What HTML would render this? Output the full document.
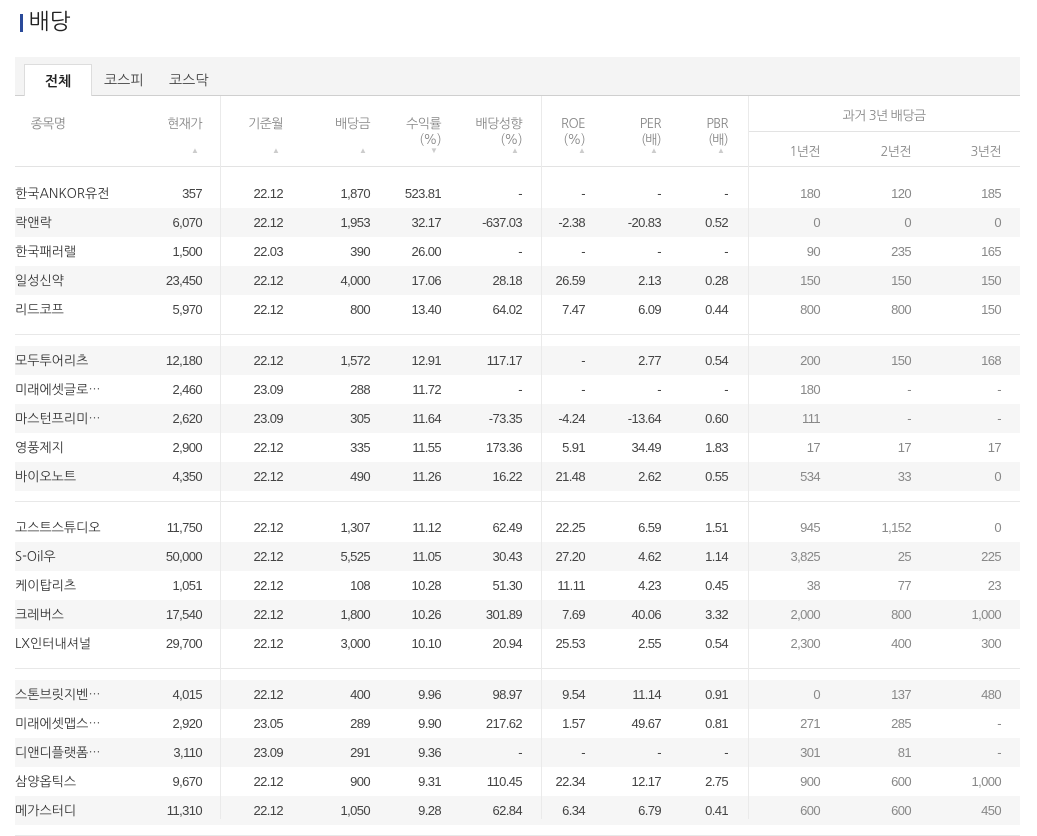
<!DOCTYPE html>
<html><head><meta charset="utf-8"><style>
body{margin:0;background:#fff;width:1037px;height:819px;overflow:hidden;position:relative;font-family:"Liberation Sans","NanumGothic","Noto Sans CJK KR",sans-serif;}
.title{position:absolute;left:29px;top:8px;font-size:22px;color:#222;font-family:"NanumGothic","Noto Sans CJK KR",sans-serif;}
.bar{position:absolute;left:20px;top:14px;width:3px;height:18px;background:#2a4a9a;}
.tabs{position:absolute;left:15px;top:57px;width:1005px;height:38px;background:#f4f4f4;border-bottom:1px solid #cfcfcf;}
.tab{position:absolute;top:15px;font-size:14px;color:#444;font-family:"NanumGothic","Noto Sans CJK KR",sans-serif;}
.tab.on{left:9px;top:7px;width:66px;height:31px;background:#fff;border:1px solid #ddd;border-bottom:none;text-align:center;line-height:34px;font-weight:bold;color:#222;}
.h{position:absolute;font-size:13px;color:#888;text-align:right;line-height:16px;letter-spacing:-0.6px;font-family:"NanumGothic","Liberation Sans",sans-serif;white-space:nowrap}
.ar{position:absolute;font-size:8px;color:#ccc;}
.vl{position:absolute;width:1px;background:#eaeaea;top:96px;height:723px;z-index:2}
.hl{position:absolute;height:1px;background:#e3e3e3}
table{position:absolute;left:15px;top:168px;border-collapse:collapse;table-layout:fixed;width:1005px;font-size:13px;letter-spacing:-0.6px;}
td{padding:0;white-space:nowrap;overflow:hidden}
tr.r td{height:29px;text-align:right;color:#444;}
tr.r td:first-child{text-align:left;color:#333;font-family:"NanumGothic","Noto Sans CJK KR",sans-serif;letter-spacing:0}
tr.r td.g{color:#888}
tr.s td{background:#f6f6f6}
tr.p1 td{height:11px}
tr.p2 td{height:10px;border-bottom:1px solid #e8e8e8}
</style></head><body>
<div class="bar"></div><div class="title">배당</div>
<div class="tabs"><div class="tab on">전체</div><div class="tab" style="left:89px">코스피</div><div class="tab" style="left:154px">코스닥</div></div>
<div class="vl" style="left:220px"></div><div class="vl" style="left:541px"></div><div class="vl" style="left:748px"></div>
<div class="hl" style="left:15px;top:166px;width:1005px"></div>
<div class="hl" style="left:748px;top:131px;width:272px"></div>
<div class="h" style="left:23px;top:116px;width:50px;text-align:center">종목명</div>
<div class="h" style="right:835px;top:116px">현재가</div>
<div class="h" style="right:754px;top:116px">기준월</div>
<div class="h" style="right:667px;top:116px">배당금</div>
<div class="h" style="right:596px;top:116px">수익률<br>(%)</div>
<div class="h" style="right:515px;top:116px">배당성향<br>(%)</div>
<div class="h" style="right:452px;top:116px">ROE<br>(%)</div>
<div class="h" style="right:376px;top:116px">PER<br>(배)</div>
<div class="h" style="right:309px;top:116px">PBR<br>(배)</div>
<div class="h" style="left:748px;top:108px;width:272px;text-align:center">과거 3년 배당금</div>
<div class="h" style="right:217px;top:144px">1년전</div>
<div class="h" style="right:126px;top:144px">2년전</div>
<div class="h" style="right:36px;top:144px">3년전</div>
<div class="ar" style="left:191px;top:146px">▲</div>
<div class="ar" style="left:272px;top:146px">▲</div>
<div class="ar" style="left:359px;top:146px">▲</div>
<div class="ar" style="left:430px;top:146px">▼</div>
<div class="ar" style="left:511px;top:146px">▲</div>
<div class="ar" style="left:578px;top:146px">▲</div>
<div class="ar" style="left:650px;top:146px">▲</div>
<div class="ar" style="left:717px;top:146px">▲</div>
<table>
<colgroup><col style="width:135px"><col style="width:70px"><col style="width:80px"><col style="width:85px"><col style="width:70px"><col style="width:86px"><col style="width:64px"><col style="width:75px"><col style="width:68px"><col style="width:92px"><col style="width:90px"><col style="width:90px"></colgroup>
<tbody id="b"></tbody>
</table>
<script>
var d=[
["한국ANKOR유전","357","22.12","1,870","523.81","-","-","-","-","180","120","185"],
["락앤락","6,070","22.12","1,953","32.17","-637.03","-2.38","-20.83","0.52","0","0","0"],
["한국패러랠","1,500","22.03","390","26.00","-","-","-","-","90","235","165"],
["일성신약","23,450","22.12","4,000","17.06","28.18","26.59","2.13","0.28","150","150","150"],
["리드코프","5,970","22.12","800","13.40","64.02","7.47","6.09","0.44","800","800","150"],
["모두투어리츠","12,180","22.12","1,572","12.91","117.17","-","2.77","0.54","200","150","168"],
["미래에셋글로…","2,460","23.09","288","11.72","-","-","-","-","180","-","-"],
["마스턴프리미…","2,620","23.09","305","11.64","-73.35","-4.24","-13.64","0.60","111","-","-"],
["영풍제지","2,900","22.12","335","11.55","173.36","5.91","34.49","1.83","17","17","17"],
["바이오노트","4,350","22.12","490","11.26","16.22","21.48","2.62","0.55","534","33","0"],
["고스트스튜디오","11,750","22.12","1,307","11.12","62.49","22.25","6.59","1.51","945","1,152","0"],
["S-Oil우","50,000","22.12","5,525","11.05","30.43","27.20","4.62","1.14","3,825","25","225"],
["케이탑리츠","1,051","22.12","108","10.28","51.30","11.11","4.23","0.45","38","77","23"],
["크레버스","17,540","22.12","1,800","10.26","301.89","7.69","40.06","3.32","2,000","800","1,000"],
["LX인터내셔널","29,700","22.12","3,000","10.10","20.94","25.53","2.55","0.54","2,300","400","300"],
["스톤브릿지벤…","4,015","22.12","400","9.96","98.97","9.54","11.14","0.91","0","137","480"],
["미래에셋맵스…","2,920","23.05","289","9.90","217.62","1.57","49.67","0.81","271","285","-"],
["디앤디플랫폼…","3,110","23.09","291","9.36","-","-","-","-","301","81","-"],
["삼양옵틱스","9,670","22.12","900","9.31","110.45","22.34","12.17","2.75","900","600","1,000"],
["메가스터디","11,310","22.12","1,050","9.28","62.84","6.34","6.79","0.41","600","600","450"]];
var pr=[0,18,17,15,14,19,20,19,20,20,19,19],h="";
function pad(c){var s="";for(var j=0;j<12;j++)s+='<td></td>';return '<tr class="'+c+'">'+s+'</tr>';}
for(var i=0;i<d.length;i++){if(i%5==0)h+=pad("p1");h+='<tr class="r'+(i%2==1?' s':'')+'">';
for(var j=0;j<12;j++){h+='<td class="'+(j>=9?'g':'')+'" style="padding-right:'+pr[j]+'px">'+d[i][j]+'</td>';}
h+='</tr>';if(i%5==4)h+=pad("p2");}
document.getElementById("b").innerHTML=h;
</script>
</body></html>
